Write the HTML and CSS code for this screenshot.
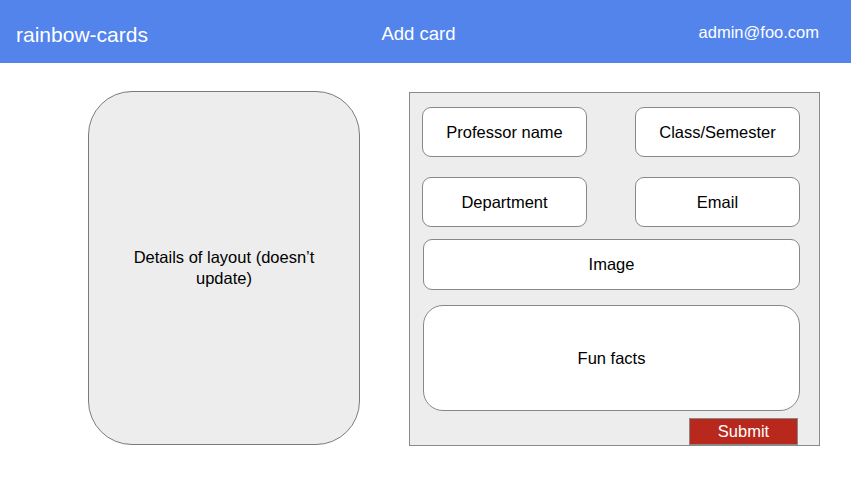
FILE: index.html
```html
<!DOCTYPE html>
<html>
<head>
<meta charset="utf-8">
<link rel="stylesheet" href="styles.css">
</head>
<body>
<header class="topbar">
  <div class="brand">rainbow-cards</div>
  <div class="title">Add card</div>
  <div class="user">admin@foo.com</div>
</header>
<main class="content">
  <div class="preview">Details of layout (doesn’t update)</div>
  <form class="panel">
    <div class="grid">
      <div class="field">Professor name</div>
      <div class="field">Class/Semester</div>
      <div class="field">Department</div>
      <div class="field">Email</div>
    </div>
    <div class="field wide image">Image</div>
    <div class="field wide facts">Fun facts</div>
    <div class="actions"><button type="button" class="submit">Submit</button></div>
  </form>
</main>
</body>
</html>
```
FILE: styles.css
```css
html, body {
  margin: 0;
  padding: 0;
  background: #ffffff;
  font-family: "Liberation Sans", Arial, sans-serif;
  color: #000;
}
.topbar {
  height: 63px;
  background: #5284EC;
  color: #ffffff;
  display: grid;
  grid-template-columns: 1fr auto 1fr;
  align-items: start;
  padding: 23px 32px 0 16px;
  box-sizing: border-box;
}
.brand {
  font-size: 21px;
  line-height: 24px;
}
.title {
  font-size: 18.5px;
  margin-left: 2px;
}
.user {
  font-size: 16.5px;
  justify-self: end;
}
.content {
  display: flex;
  align-items: flex-start;
  padding: 28px 0 0 88px;
}
.preview {
  width: 272px;
  height: 354px;
  box-sizing: border-box;
  background: #EDEDED;
  border: 1px solid #7a7a7a;
  border-radius: 44px;
  display: flex;
  align-items: center;
  justify-content: center;
  text-align: center;
  font-size: 16.5px;
  line-height: 21px;
  padding: 0 40px;
}
.panel {
  margin: 1px 0 0 49px;
  width: 411px;
  height: 354px;
  box-sizing: border-box;
  background: #EDEDED;
  border: 1px solid #8a8a8a;
  padding: 14px 19px 0 12px;
  display: flex;
  flex-direction: column;
}
.grid {
  display: grid;
  grid-template-columns: 165px 165px;
  column-gap: 48px;
  row-gap: 20px;
}
.field {
  height: 50px;
  box-sizing: border-box;
  background: #ffffff;
  border: 1px solid #888888;
  border-radius: 9px;
  display: flex;
  align-items: center;
  justify-content: center;
  font-size: 16.5px;
}
.wide {
  margin-left: 1px;
  width: 377px;
}
.image {
  margin-top: 12px;
  height: 51px;
}
.facts {
  margin-top: 15px;
  height: 106px;
  border-radius: 20px;
}
.actions {
  display: flex;
  justify-content: flex-end;
  margin-top: 7px;
  padding-right: 2px;
}
.submit {
  width: 109px;
  height: 27px;
  background: #B8281D;
  color: #ffffff;
  border: 1px solid #888888;
  font-family: "Liberation Sans", Arial, sans-serif;
  font-size: 16.5px;
  padding: 0;
  margin: 0;
}
```
